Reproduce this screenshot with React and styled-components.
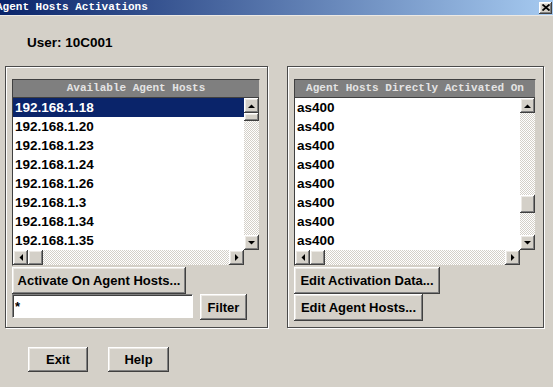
import React from 'react'
import styled, { createGlobalStyle, css } from 'styled-components'

const GlobalStyle = createGlobalStyle`
html, body {
  margin: 0;
  padding: 0;
  background: #d4d0c8;
}
body {
  font-family: "Liberation Sans", Arial, sans-serif;
}
`

const raised = css`
background: #d4d0c8;
box-shadow: inset -1px -1px #404040, inset 1px 1px #ffffff, inset -2px -2px #808080, inset 2px 2px #ece9e4;
`

const hosts = [
  '192.168.1.18',
  '192.168.1.20',
  '192.168.1.23',
  '192.168.1.24',
  '192.168.1.26',
  '192.168.1.3',
  '192.168.1.34',
  '192.168.1.35',
]

const activated = Array(8).fill('as400')

function Arrow({ dir }) {
  const pts = {
    up: '0,4 7,4 3.5,0.5',
    down: '0,0 7,0 3.5,3.5',
    left: '4,0 4,7 0.5,3.5',
    right: '0,0 0,7 3.5,3.5',
  }[dir]
  const vertical = dir === 'up' || dir === 'down'
  return (
    <ArrowButton>
      <svg width={vertical ? 7 : 4} height={vertical ? 4 : 7}>
        <polygon points={pts} fill="#000" />
      </svg>
    </ArrowButton>
  )
}

function ListPanel({ title, items, selected, thumbOffset, thumbSize, width }) {
  return (
    <ListBox width={width}>
      <ListHeader>{title}</ListHeader>
      <ListBody>
        <Rows>
          {items.map((item, i) => (
            <Row key={i} selected={i === selected}>{item}</Row>
          ))}
        </Rows>
        <VScroll>
          <Arrow dir="up" />
          <Track vertical>
            <Thumb style={{ marginTop: thumbOffset, height: thumbSize }} />
          </Track>
          <Arrow dir="down" />
        </VScroll>
      </ListBody>
      <HScroll>
        <Arrow dir="left" />
        <HThumb />
        <Track />
        <Arrow dir="right" />
        <Corner />
      </HScroll>
    </ListBox>
  )
}

export default function App() {
  return (
    <Window>
      <GlobalStyle />
      <TitleBar>
        <TitleText>Agent Hosts Activations</TitleText>
        <CloseButton>
          <svg width="8" height="7" viewBox="0 0 8 7">
            <path d="M0.5 0.5 L7.5 6.5 M7.5 0.5 L0.5 6.5" stroke="#000" strokeWidth="1.8" />
          </svg>
        </CloseButton>
      </TitleBar>

      <UserLabel>User: 10C001</UserLabel>

      <PanelRow>
        <Panel width={263}>
          <ListPanel
            title="Available Agent Hosts"
            items={hosts}
            selected={0}
            thumbOffset={0}
            thumbSize={8}
            width={248}
          />
          <Button width={174}>Activate On Agent Hosts...</Button>
          <FilterRow>
            <TextInput defaultValue="*" />
            <Button width={47} height={26}>Filter</Button>
          </FilterRow>
        </Panel>

        <Panel width={257}>
          <ListPanel
            title="Agent Hosts Directly Activated On"
            items={activated}
            selected={-1}
            thumbOffset={82}
            thumbSize={18}
            width={242}
          />
          <Button width={146}>Edit Activation Data...</Button>
          <Button width={129}>Edit Agent Hosts...</Button>
        </Panel>
      </PanelRow>

      <Footer>
        <Button width={60} height={25}>Exit</Button>
        <Button width={61} height={25}>Help</Button>
      </Footer>
    </Window>
  )
}

const Window = styled.div`
width: 553px;
height: 387px;
background: #d4d0c8;
display: flex;
flex-direction: column;
overflow: hidden;
`

const TitleBar = styled.div`
height: 15px;
border-bottom: 1px solid #ece9e4;
background: linear-gradient(to right, #0a246a, #a6caf0);
display: flex;
align-items: center;
justify-content: space-between;
padding-right: 1px;
`

const TitleText = styled.div`
margin-left: -4px;
color: #ffffff;
font-family: "Liberation Mono", "Courier New", monospace;
font-weight: bold;
font-size: 11px;
line-height: 15px;
white-space: nowrap;
`

const CloseButton = styled.div`
${raised}
width: 13px;
height: 12px;
display: flex;
align-items: center;
justify-content: center;
`

const UserLabel = styled.div`
margin: 19px 0 0 27px;
font-size: 13.5px;
font-weight: bold;
line-height: 16px;
color: #000;
`

const PanelRow = styled.div`
display: flex;
gap: 19px;
margin: 15px 0 0 5px;
`

const Panel = styled.div`
box-sizing: border-box;
width: ${p => p.width}px;
height: 262px;
border: 1px solid #4a4a4a;
box-shadow: inset 1px 1px #ffffff, 1px 1px #ffffff;
padding: 12px 0 0 6px;
display: flex;
flex-direction: column;
align-items: flex-start;
`

const ListBox = styled.div`
box-sizing: border-box;
width: ${p => p.width}px;
border: 1px solid #404040;
border-right-color: #d4d0c8;
border-bottom-color: #d4d0c8;
background: #ffffff;
margin-bottom: 1px;
`

const ListHeader = styled.div`
height: 17px;
background: #7f7f7f;
border-bottom: 1px solid #404040;
color: #e4e4e4;
font-family: "Liberation Mono", "Courier New", monospace;
font-weight: bold;
font-size: 11px;
line-height: 17px;
text-align: center;
white-space: nowrap;
overflow: hidden;
`

const ListBody = styled.div`
display: flex;
height: 152px;
`

const Rows = styled.div`
flex: 1;
overflow: hidden;
`

const Row = styled.div`
height: 19px;
line-height: 19px;
padding-left: 2px;
font-size: 13.5px;
font-weight: bold;
color: ${p => (p.selected ? '#ffffff' : '#000000')};
background: ${p => (p.selected ? '#0a246a' : 'transparent')};
white-space: nowrap;
`

const VScroll = styled.div`
width: 15px;
display: flex;
flex-direction: column;
`

const ArrowButton = styled.div`
${raised}
flex: none;
width: 15px;
height: 15px;
display: flex;
align-items: center;
justify-content: center;
`

const Track = styled.div`
flex: 1;
display: flex;
flex-direction: ${p => (p.vertical ? 'column' : 'row')};
background: repeating-conic-gradient(#d4d0c8 0 25%, #ffffff 0 50%) 0 0 / 2px 2px;
`

const Thumb = styled.div`
${raised}
width: 15px;
`

const HScroll = styled.div`
height: 15px;
display: flex;
`

const HThumb = styled.div`
${raised}
width: 15px;
height: 15px;
`

const Corner = styled.div`
width: 15px;
height: 15px;
background: #d4d0c8;
`

const Button = styled.div`
${raised}
box-sizing: border-box;
width: ${p => p.width}px;
height: ${p => p.height || 27}px;
flex: none;
display: flex;
align-items: center;
justify-content: center;
font-size: 13px;
font-weight: bold;
color: #000;
white-space: nowrap;
`

const FilterRow = styled.div`
display: flex;
gap: 7px;
align-items: flex-start;
`

const TextInput = styled.input`
box-sizing: border-box;
width: 181px;
height: 24px;
margin: 0;
padding: 0 2px;
border: 1px solid;
border-color: #808080 #ffffff #ffffff #808080;
box-shadow: inset 1px 1px #404040;
background: #ffffff;
font-family: "Liberation Sans", Arial, sans-serif;
font-size: 13px;
font-weight: bold;
outline: none;
`

const Footer = styled.div`
display: flex;
gap: 20px;
margin: 19px 0 0 28px;
`
